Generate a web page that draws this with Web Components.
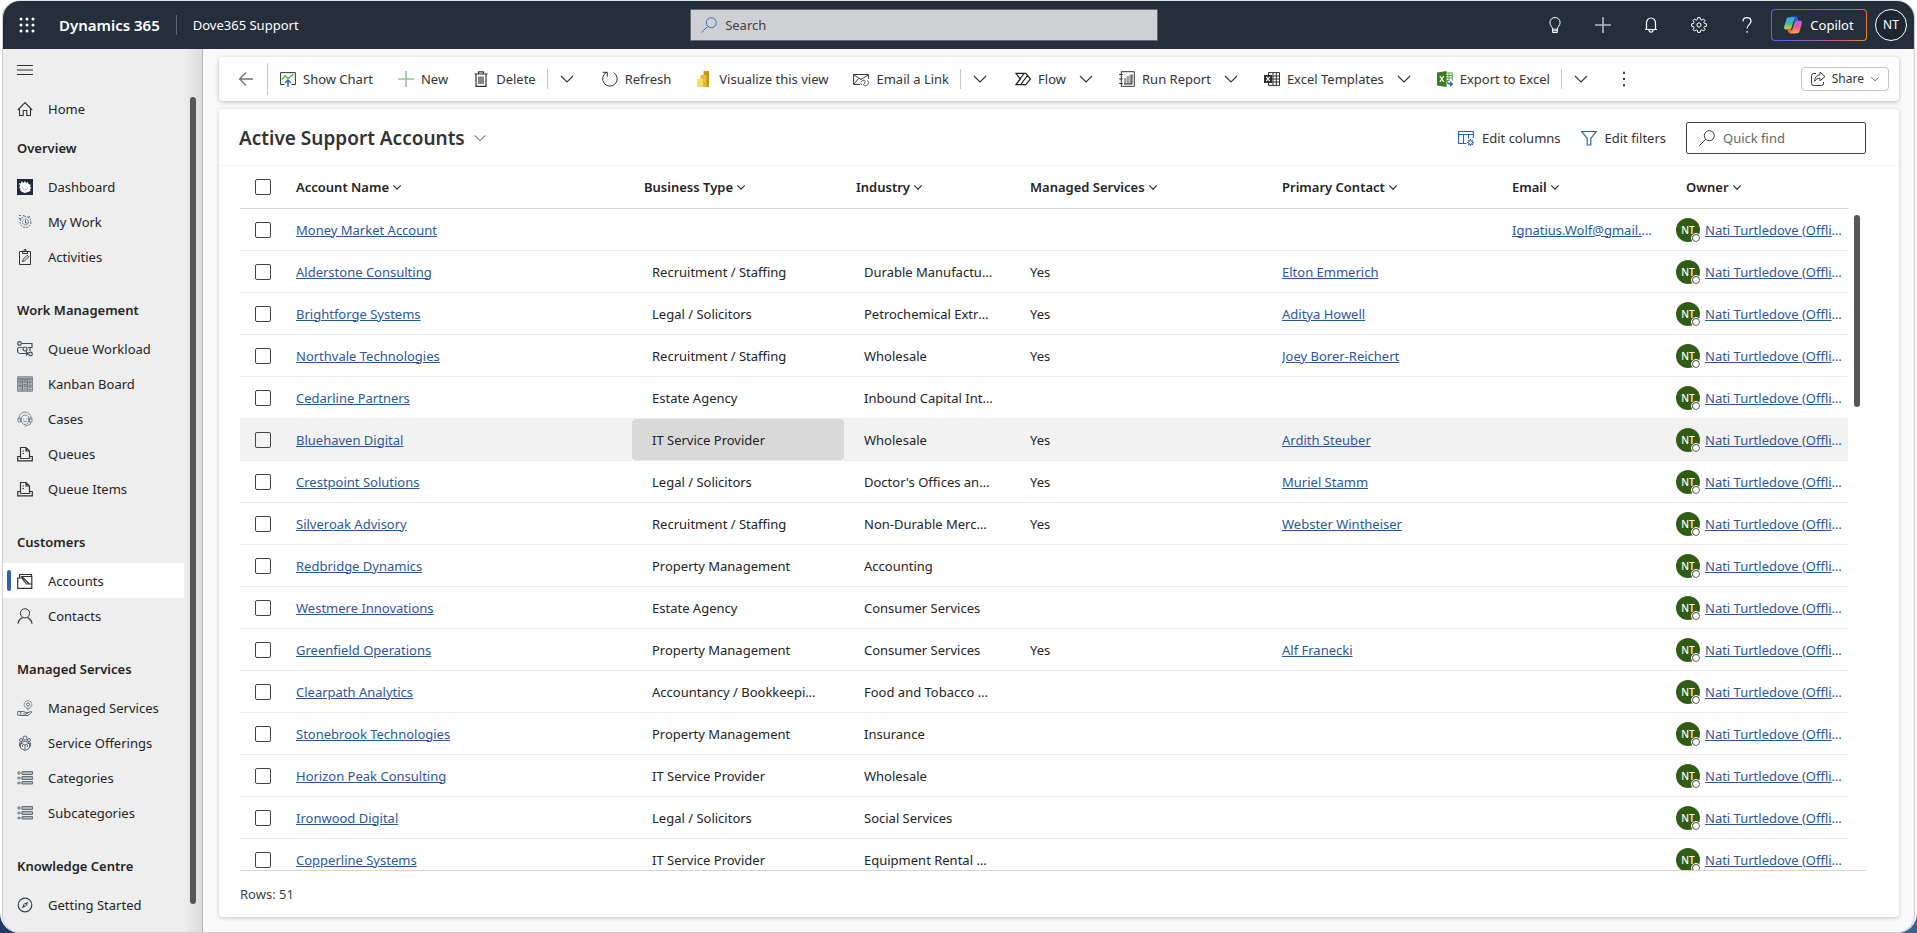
<!DOCTYPE html>
<html lang="en">
<head>
<meta charset="utf-8">
<title>Active Support Accounts - Dynamics 365</title>
<style>
  html, body { height: 100%; }
  body {
    margin: 0; overflow: hidden; font: 13px/20px "Noto Sans", "Open Sans", sans-serif; color: #242424;
    background: linear-gradient(#fff 50%, transparent 50%), linear-gradient(90deg, #1f3a68, #3e618e);
  }
</style>
</head>
<body>
<app-shell>
  <app-header slot="header"></app-header>
  <app-sidebar slot="sidebar">
    <nav-item icon="home">Home</nav-item>
    <nav-group label="Overview">
      <nav-item icon="dashboard">Dashboard</nav-item>
      <nav-item icon="mywork">My Work</nav-item>
      <nav-item icon="activities">Activities</nav-item>
    </nav-group>
    <nav-group label="Work Management" spaced>
      <nav-item icon="workload">Queue Workload</nav-item>
      <nav-item icon="kanban">Kanban Board</nav-item>
      <nav-item icon="cases">Cases</nav-item>
      <nav-item icon="queue">Queues</nav-item>
      <nav-item icon="queue">Queue Items</nav-item>
    </nav-group>
    <nav-group label="Customers" spaced>
      <nav-item icon="account" selected>Accounts</nav-item>
      <nav-item icon="contact">Contacts</nav-item>
    </nav-group>
    <nav-group label="Managed Services" spaced>
      <nav-item icon="managed">Managed Services</nav-item>
      <nav-item icon="offering">Service Offerings</nav-item>
      <nav-item icon="category">Categories</nav-item>
      <nav-item icon="category">Subcategories</nav-item>
    </nav-group>
    <nav-group label="Knowledge Centre" spaced>
      <nav-item icon="compass">Getting Started</nav-item>
    </nav-group>
  </app-sidebar>
  <command-bar>
    <command-button icon="chart">Show Chart</command-button>
    <command-button icon="plus">New</command-button>
    <command-button icon="trash" menu="split">Delete</command-button>
    <command-button icon="refresh">Refresh</command-button>
    <command-button icon="powerbi">Visualize this view</command-button>
    <command-button icon="mail" menu="split">Email a Link</command-button>
    <command-button icon="flow" menu="drop">Flow</command-button>
    <command-button icon="report" menu="drop">Run Report</command-button>
    <command-button icon="exceltpl" menu="drop">Excel Templates</command-button>
    <command-button icon="excel" menu="split">Export to Excel</command-button>
  </command-bar>
  <grid-view>
    <accounts-table></accounts-table>
  </grid-view>
</app-shell>

<script>
const ICONS = {
  waffle: '<g fill="#fff" stroke="none"><circle cx="2" cy="2" r="1.5"/><circle cx="8" cy="2" r="1.5"/><circle cx="14" cy="2" r="1.5"/><circle cx="2" cy="8" r="1.5"/><circle cx="8" cy="8" r="1.5"/><circle cx="14" cy="8" r="1.5"/><circle cx="2" cy="14" r="1.5"/><circle cx="8" cy="14" r="1.5"/><circle cx="14" cy="14" r="1.5"/></g>',
  search: '<circle cx="10.3" cy="5.7" r="5"/><path d="M6.7 9.3.4 15.6"/>',
  bulb: '<path d="M5.6 12.2c0-2.6-2.7-3.4-2.7-6.6a5.1 5.1 0 0 1 10.2 0c0 3.200-2.700 4-2.700 6.600zM5.600 12.200v3.300h4.800v-3.300M5.600 13.800h4.800"/>',
  add: '<path d="M8 0v16M0 8h16" stroke="#b4b8bd" stroke-width="1.6"/>',
  bell: '<path d="M3.500 12.500V6a4.500 5 0 0 1 9 0v6.500M2 12.500h12M6 13a2 2.200 0 0 0 4 0" stroke-width="1.200"/>',
  gear: '<circle cx="8" cy="8" r="2.100"/><path d="m6.800.6-.4 2-1.200.5L3.500 2 2 3.500l1.100 1.700-.5 1.200-2 .4v2.400l2 .4.5 1.200L2 12.500 3.500 14l1.700-1.100 1.200.5.4 2h2.400l.4-2 1.200-.5 1.700 1.100 1.500-1.500-1.100-1.700.5-1.200 2-.4V6.800l-2-.4-.5-1.200L14 3.500 12.500 2l-1.700 1.100-1.200-.5-.4-2z"/>',
  help: '<path d="M4 4.400C4 1.900 5.700.600 8 .600s4 1.400 4 3.600c0 3.200-4 3.600-4 7.300M8 14v1.800" stroke-width="1.200"/>',
  copilot: '<defs><linearGradient id="a" x1="0" y1="0" x2="0" y2="1"><stop offset="0" stop-color="#3aa8f5"/><stop offset=".5" stop-color="#3fb8a0"/><stop offset="1" stop-color="#e8c52a"/></linearGradient><linearGradient id="b" x1="0" y1="0" x2="0" y2="1"><stop offset="0" stop-color="#b85cf0"/><stop offset=".5" stop-color="#ee5d90"/><stop offset="1" stop-color="#f8a05a"/></linearGradient></defs><path stroke="none" fill="#2563d8" d="M6 .5h4.600c1 0 1.400.7 1.700 1.700l.9 2.800H9.800L8 3z"/><path stroke="none" fill="url(#a)" d="M4.300 1h5.300L7 9.500c-.5 1.500-1 2.500-2.500 2.500H1.600C.1 12-.2 10.600.2 9.200L2.300 2.500C2.600 1.500 3.200 1 4.300 1z"/><path stroke="none" fill="#f06a3a" d="M10 15.500H5.400c-1 0-1.400-.700-1.700-1.700L3 12h3.500z"/><path stroke="none" fill="url(#b)" d="M11.700 15.300H6.400L9 6.700C9.500 5.200 10 4.300 11.500 4.300h2.900c1.500 0 1.800 1.400 1.400 2.800l-2.100 6.700c-.3 1-.9 1.500-2 1.500z"/>',
  menu: '<path d="M0 3.500h16M0 8h16M0 12.500h16"/>',
  back: '<path d="M15 8H1.500M8 1.500 1.500 8 8 14.500" stroke="#777" stroke-width="1.300"/>',
  chevron: '<path d="m2 5 6 6 6-6" stroke-width="1.100"/>',
  chevbold: '<path d="m2 5.500 6 6 6-6" stroke-width="1.700"/>',
  home: '<path d="M.8 9 8 1.500 15.200 9M2.500 8v6.500h3.700v-5h3.600v5h3.700V8" stroke-width="1.100"/>',
  dashboard: '<path stroke="none" fill="#1f2b3a" d="M0 0h16v16H0z"/><path stroke="none" fill="#fff" d="m2 4 2 .5L4.500 2l2 2L8 2l1 2 2-1 .5 2L14 6l-1 1.500 1.500 1.500-1.500 1 .5 2-2.500 1-3 1-3-1-2-2 .5-1.500L2 8.500 3 7z"/><path d="M5 8.500c1 2 4 3 6 1" stroke="#8b95a0" stroke-width=".7"/>',
  mywork: '<g stroke="#596775"><circle cx="8.500" cy="8" r="5.500" stroke-dasharray="2 1"/><circle cx="8.500" cy="8" r="3" stroke-dasharray="1.500 .7"/><path d="M8.500 6v3h2M2 1.500h2M2 4.500h2M6 1.500h1.500M12 2l1 1.500"/></g>',
  activities: '<path d="M2.500 2.500h11v13h-11zM5.500 4.500v-2H7V.7h2v1.800h1.500v2zM5.500 12.500l.7-2.200 4-4 1.500 1.500-4 4z"/>',
  workload: '<g stroke="#3f4b58" stroke-width="1.200"><circle cx="2.500" cy="2.500" r="1.800"/><circle cx="8" cy="8" r="2"/><path d="M4.500 2.500H15v4h-4M5.500 6.500H2.500a2 2 0 0 0-2 2c0 3.500 1 4 3.500 4h6M9 10.500l2 2-2 2M13 6v4"/><circle cx="13.500" cy="13" r="1.800"/></g>',
  kanban: '<g stroke="#6b7580" stroke-width=".9"><path fill="#b8bcc1" d="M.6.8h14.800v2H.6zM.6 3h4.600v12.200H.6zM5.600 3h4.600v12.200H5.600zM10.600 3h4.800v12.200h-4.800z"/><path d="M2 5h2v2H2zM2 9h2v1.500H2zM7 4.500h2v2H7zM7 8.500h2v2H7zM12 5h2v2h-2zM12 9h2v2h-2zM2 13h2M7 13h2M12 13.500h2"/></g>',
  cases: '<g stroke="#828b94"><path d="M2 9V7a6 6 0 0 1 12 0v2M1 7h2.500v4H1zM12.500 7H15v4h-2.500zM4.500 6.500A4 4 0 0 1 8 4c2 0 3.500 1 3.500 2.500V10c0 2-1.500 3.500-3.500 3.500S4.500 12 4.500 10zM13.500 11v2l-4 2h-2M6 8h1M9 8h1M6.500 10.500h3"/></g>',
  queue: '<path d="M3.500 12.500V1.500h5.500l3.500 3.500v7.500M9 1.500V5h3.500M3.500 10.500H.7v4.300h14.600v-4.300h-2.800M3.500 12.500h9M5.500 5h1.500M5.500 7.500h1.500" stroke-width="1.200"/>',
  account: '<path d="M2.500 5V1.500h12v2M14.800 3v12.300H.7V5h4l4.800 6h5.300V3.500h-10l7.500 7.500" stroke-width="1.200"/>',
  contact: '<circle cx="8" cy="5.300" r="4.600"/><path d="M1 15.800c0-3 2-5 4.500-6.400M15 15.800c0-3-2-5-4.500-6.400" stroke-width="1.200"/>',
  managed: '<g stroke="#5d6975"><circle cx="11" cy="4.500" r="3.800" stroke-dasharray="2 .8"/><circle cx="11" cy="4.500" r="1.500"/><path d="M11 8.500v2M.7 11.500h3v3.800h-3zM3.700 11.500h3l2 1h2l-1 1.500H6M9.500 13.500l4-2 1.500.5-4 3.500H3.700"/></g>',
  offering: '<g stroke="#5d6975"><path d="m8 6 4.500 2v5L8 15.500 3.500 13V8zM3.500 8 8 10l4.500-2M8 10v5.500"/><circle cx="8" cy="3" r="2"/><circle cx="4" cy="5" r="1.500"/><circle cx="12" cy="5" r="1.500"/><path d="M2.500 7.500v4M13.500 7.500v4M6 5.500l1 1M10 5.500l-1 1M5.500 10v2M10.500 10v2"/></g>',
  category: '<g stroke="#66717c"><path fill="#b0b5ba" d="M5 1.500h10.500v3H5zM5 6.500h10.500v3H5zM5 11.500h10.500v2.500H5z"/><path d="M0 3h4.500M0 8h4.500M0 13h4.500M2 1v4M2 6.500v3M2 11.500v3"/></g>',
  compass: '<g stroke="#33404d"><circle cx="8" cy="8" r="6.800" stroke-width="1.200"/><path fill="#33404d" d="M11.300 4.700 9.200 9.200 4.700 11.300 6.800 6.800z" stroke="none"/><circle cx="8" cy="8" r=".9" fill="#eee" stroke="none"/></g>',
  chart: '<path d="M4.500 13.500H.6V1.600h14.800v11.900h-3.900"/><path stroke="#5fae57" stroke-width="1.400" d="m2 8.500 3-4 3 3 5.500-4.500"/><path stroke="#2f5fb3" stroke-width="1.400" d="M8 16V9.500M5 12l3-3 3 3"/>',
  plus: '<path d="M8 0v16M0 8h16" stroke="#98c894" stroke-width="1.700"/>',
  trash: '<path d="M1.500 3h13M5.500 3V.8h5V3M3 3v12.400h10V3M6 5.500V13M8 5.500V13M10 5.500V13" stroke-width="1.200"/>',
  refresh: '<path d="M4.700 1.300A7.300 7.300 0 1 0 11.500 1.500M.8 1.300h4.500v4.400"/>',
  powerbi: '<path stroke="none" fill="#c6921c" d="M7.500 1c0-.6.4-1 1-1h4.500v16H8z"/><path stroke="none" fill="#e5bd30" d="M4.500 5c0-.6.4-1 1-1h4c.6 0 1 .4 1 1v11h-6z"/><path stroke="none" fill="#f5dc6d" d="M1 9c0-.6.4-1 1-1h4c.6 0 1 .4 1 1v7H2c-.6 0-1-.4-1-1z"/>',
  mail: '<path d="M7 13.500H.6v-10h14.800V8M1 4l7 4.500L15 4M1 13l4.500-5.500"/><path stroke="#666" d="M8 11c1-1.800 3-2.200 4-1.200s0 2-1 1.700M15.500 12.500c-1 2.500-3.500 3-4.500 2s0-2.300 1.200-2M9 13.500c-1 0-1.500-1-1-2M14 9.500c1.200.3 2 1.500 1.500 3"/>',
  flow: '<path d="M.9 2.300h9.900L15.500 8l-4.700 5.700H.9L5.500 8zM9 2.500.9 13.700M12.500 4.500 5.700 13.700" stroke="#222" stroke-width="1.200"/>',
  report: '<path d="M2.300.7h13v14.600h-13zM.2 3.500h3.500M.2 8h3.500M.2 12.500h3.500"/><path stroke="none" fill="#999" d="M5 7h2.200v6H5zM7.700 5h2.200v8H7.700zM10.400 3.500H13V13h-2.600z"/><path d="M5 13h8V3.500"/>',
  exceltpl: '<path d="M4.500 4V1.600h11v12.800h-11V12M4.500 5h11M4.500 8h11M4.500 11h11M9 1.600v12.800M12.300 1.600v12.800"/><path stroke="none" fill="#2d2d2d" d="M0 4h8v8H0z"/><path stroke="#fff" stroke-width="1.100" d="m2.300 5.800 3.400 4.400M5.700 5.800 2.300 10.200"/>',
  excel: '<path stroke="#5c9b43" d="M9 2h6.300v7.500M9 4.500h6M9 7h6M9 9.500h3M12 2v8"/><path stroke="none" fill="#3b7d1e" d="M0 1.500 9.500 0v16L0 14.500z"/><path stroke="#fff" stroke-width="1.300" d="m2.800 5 4 6M6.800 5l-4 6"/><path stroke="#2f5fb3" stroke-width="1.300" d="M10.500 10.500c0 1.800.8 2.500 2.500 2.500h2M13 10.800l2.300 2.200-2.300 2.400"/>',
  dots: '<g fill="#333" stroke="none"><path d="M7 .8h2v2H7zM7 7h2v2H7zM7 13.200h2v2H7z"/></g>',
  share: '<path d="M6 2.500H3.500a2 2 0 0 0-2 2v8a2 2 0 0 0 2 2h8a2 2 0 0 0 2-2V11M10 1.200l5 4.300-5 4.300V7.300c-2.500 0-4 .7-5.500 3C4.700 6.500 6.500 4 10 3.700z"/>',
  columns: '<g stroke="#2f5fb3"><path d="M8.500 13.500H.6V1.500h14.800V8M.6 4.500h14.800M5.500 4.500v9M10.500 4.500v4" stroke-width="1.100"/><circle cx="12.500" cy="12.500" r="2"/><path d="M12.500 9v1.500M12.500 14.500V16M9 12.500h1.500M14.500 12.500H16M10 10l1 1M14 14l1 1M15 10l-1 1M11 14l-1 1"/></g>',
  filter: '<path stroke="#2f5fb3" stroke-width="1.200" d="M.8 1.500h14.400L9.800 8.500v6.500H6.200V8.500z"/>'
};

/* Base class: renders the template of the element into an open shadow root. */
class UIElement extends HTMLElement {
  connectedCallback() {
    if (this.shadowRoot) return;
    this.attachShadow({ mode: 'open' }).innerHTML = this.render();
  }
}

customElements.define('ui-icon', class extends UIElement {
  render() {
    return `<style>
      :host { display: inline-flex; flex: none; width: var(--size, 16px); height: var(--size, 16px); }
      svg { width: 100%; height: 100%; overflow: visible; }
    </style><svg viewBox="0 0 16 16" fill="none" stroke="currentColor" aria-hidden="true">${ICONS[this.getAttribute('name')]}</svg>`;
  }
});

customElements.define('app-shell', class extends UIElement {
  render() {
    return `<style>
      :host { display: block; box-sizing: border-box; height: 100vh; padding: 0 2px; background: #fff; border-radius: 0 0 20px 20px; }
      .frame { box-sizing: border-box; height: 100%; display: flex; flex-direction: column; overflow: hidden; border: 1px solid #ccc; border-top-color: #dfe3e3; border-radius: 18px; background: #f9f9f9; }
      .below { flex: 1; min-height: 0; display: flex; }
      main { flex: 1; min-width: 0; display: flex; flex-direction: column; gap: 8px; padding: 8px 15px 15px 16px; }
    </style>
    <div class="frame"><slot name="header"></slot>
      <div class="below"><slot name="sidebar"></slot><main><slot></slot></main></div>
    </div>`;
  }
});

customElements.define('app-header', class extends UIElement {
  render() {
    return `<style>
      :host { display: grid; grid-template-columns: 10fr 468px 11fr; align-items: center; flex: none; height: 48px; background: #252f3b; color: #fff; }
      .left, .right { display: flex; align-items: center; }
      .left { padding-left: 16px; }
      .right { justify-content: flex-end; padding-right: 7px; }
      button { all: unset; box-sizing: border-box; display: inline-flex; align-items: center; justify-content: center; height: 32px; }
      .brand { margin-left: 24px; font-size: 15px; font-weight: 600; }
      .app { margin-left: 16px; padding-left: 16px; line-height: 20px; border-left: 1px solid #5c6570; }
      .search { display: flex; align-items: center; gap: 8px; box-sizing: border-box; height: 32px; padding: 0 10px; background: #cfd0d4; border: 1px solid #666b72; color: #3b6fc4; }
      input { all: unset; flex: 1; color: #444; }
      input::placeholder { color: #444; opacity: 1; }
      .tool { width: 48px; }
      .copilot { width: 96px; gap: 8px; border: 1px solid transparent; border-radius: 4px;
        background: linear-gradient(#252f3b, #252f3b) padding-box, linear-gradient(120deg, #5b5ff0 25%, #a556c0 55%, #d9506e 75%, #e8912c) border-box; }
      .copilot ui-icon { --size: 18px; }
      .me { width: 32px; margin-left: 8px; border: 1px solid #fff; border-radius: 50%; background: #1d2631; font-size: 12px; }
    </style>
    <div class="left"><button aria-label="App launcher"><ui-icon name="waffle"></ui-icon></button>
      <span class="brand">Dynamics 365</span><span class="app">Dove365 Support</span></div>
    <label class="search"><ui-icon name="search"></ui-icon><input placeholder="Search" aria-label="Search"></label>
    <div class="right">
      ${['bulb', 'add', 'bell', 'gear', 'help'].map(n => `<button class="tool" aria-label="${n}"><ui-icon name="${n}"></ui-icon></button>`).join('')}
      <button class="copilot"><ui-icon name="copilot"></ui-icon>Copilot</button>
      <button class="me">NT</button>
    </div>`;
  }
});

customElements.define('app-sidebar', class extends UIElement {
  render() {
    return `<style>
      :host { display: block; flex: none; position: relative; box-sizing: border-box; width: 200px; overflow: hidden; border-right: 1px solid #b5b5b5; background: linear-gradient(90deg, #eee 180px, #dcdcdc); }
      nav { width: 181px; }
      button { all: unset; display: flex; align-items: center; height: 42px; padding-left: 14px; color: #333; }
      .thumb { position: absolute; right: 6px; top: 48px; bottom: 28px; width: 6px; border-radius: 3px; background: #565656; }
    </style>
    <button aria-label="Site map"><ui-icon name="menu"></ui-icon></button>
    <nav><slot></slot></nav><div class="thumb"></div>`;
  }
});

customElements.define('nav-group', class extends UIElement {
  render() {
    return `<style>
      :host { display: block; }
      :host([spaced]) { padding-top: 14px; }
      h2 { margin: 0; height: 43px; padding-left: 14px; font-size: 13px; font-weight: 600; line-height: 45px; }
    </style><h2>${this.getAttribute('label')}</h2><slot></slot>`;
  }
});

customElements.define('nav-item', class extends UIElement {
  render() {
    return `<style>
      :host { display: block; position: relative; }
      a { display: flex; align-items: center; gap: 15px; height: 35px; padding-left: 14px; color: #333; text-decoration: none; }
      :host([selected]) { background: #fff; }
      :host([selected])::before { content: ""; position: absolute; left: 4px; top: 7px; width: 4px; height: 21px; border-radius: 2px; background: #2f5fb3; }
      span { color: #242424; }
    </style><a href="#"><ui-icon name="${this.getAttribute('icon')}"></ui-icon><span><slot></slot></span></a>`;
  }
});

customElements.define('command-bar', class extends UIElement {
  render() {
    return `<style>
      :host { display: flex; align-items: center; flex: none; height: 44px; padding: 0 10px 0 19px; border-radius: 4px; background: #fff; box-shadow: 0 1px 4px rgba(0,0,0,.26); }
      button { all: unset; display: flex; align-items: center; color: #333; }
      .rule { width: 1px; height: 32px; margin: 0 12px 0 13px; background: #c8c8c8; }
      .items { display: flex; align-items: center; gap: 25px; }
      .share { margin-left: auto; box-sizing: border-box; height: 24px; padding: 0 8px; gap: 6px; border: 1px solid #c4c4c4; border-radius: 4px; font-size: 12px; }
      .share ui-icon:last-child { --size: 10px; }
    </style>
    <button aria-label="Back"><ui-icon name="back"></ui-icon></button><span class="rule"></span>
    <div class="items"><slot></slot><button aria-label="More commands"><ui-icon name="dots"></ui-icon></button></div>
    <button class="share"><ui-icon name="share"></ui-icon>Share<ui-icon name="chevron"></ui-icon></button>`;
  }
});

customElements.define('command-button', class extends UIElement {
  render() {
    const menu = this.getAttribute('menu');
    return `<style>
      :host { display: flex; align-items: center; white-space: nowrap; }
      button { all: unset; display: flex; align-items: center; gap: 7px; color: #333; }
      .split { height: 20px; padding: 0 2px 0 11px; margin-left: 11px; border-left: 1px solid #c8c8c8; }
      .drop { margin-left: 12px; }
    </style><button><ui-icon name="${this.getAttribute('icon')}"></ui-icon><span><slot></slot></span></button>
    ${menu ? `<button class="${menu}" aria-label="More options"><ui-icon name="chevron"></ui-icon></button>` : ''}`;
  }
});

customElements.define('grid-view', class extends UIElement {
  render() {
    return `<style>
      :host { display: flex; flex-direction: column; flex: 1; min-height: 0; border-radius: 4px; background: #fff; box-shadow: 0 1px 4px rgba(0,0,0,.2); }
      header { display: flex; align-items: center; gap: 20px; flex: none; box-sizing: border-box; height: 57px; padding: 2px 33px 0 20px; border-bottom: 1px solid #f4f4f4; }
      h1 { margin: 0; font-size: 19px; line-height: 24px; font-weight: 600; }
      button { all: unset; display: flex; align-items: center; gap: 8px; color: #333; }
      .view { margin-right: auto; }
      .view ui-icon { --size: 14px; }
      .find { display: flex; align-items: center; gap: 8px; box-sizing: border-box; width: 180px; height: 32px; padding: 0 12px; border: 1px solid #444; border-radius: 2px; color: #333; }
      input { all: unset; flex: 1; min-width: 0; }
      input::placeholder { color: #666; opacity: 1; }
      .body { flex: 1; min-height: 0; overflow: hidden; position: relative; margin: 0 33px 0 21px; padding-right: 18px; border-bottom: 1px solid #d6d6d6; }
      .thumb { position: absolute; right: 6px; top: 49px; width: 6px; height: 192px; border-radius: 3px; background: #565656; }
      footer { flex: none; padding: 13px 21px; color: #424242; }
    </style>
    <header><button class="view"><h1>Active Support Accounts</h1><ui-icon name="chevron"></ui-icon></button>
      <button><ui-icon name="columns"></ui-icon>Edit columns</button>
      <button><ui-icon name="filter"></ui-icon>Edit filters</button>
      <label class="find"><ui-icon name="search"></ui-icon><input placeholder="Quick find" aria-label="Quick find"></label>
    </header>
    <div class="body"><slot></slot><div class="thumb"></div></div>
    <footer>Rows: 51</footer>`;
  }
});

const COLUMNS = [['Account Name', 348], ['Business Type', 212], ['Industry', 174], ['Managed Services', 252], ['Primary Contact', 230], ['Email', 174], ['Owner', 174]];
const ROWS = [
  ['Money Market Account', '', '', '', '', 'Ignatius.Wolf@gmail.com'],
  ['Alderstone Consulting', 'Recruitment / Staffing', 'Durable Manufacturing', 'Yes', 'Elton Emmerich'],
  ['Brightforge Systems', 'Legal / Solicitors', 'Petrochemical Extraction', 'Yes', 'Aditya Howell'],
  ['Northvale Technologies', 'Recruitment / Staffing', 'Wholesale', 'Yes', 'Joey Borer-Reichert'],
  ['Cedarline Partners', 'Estate Agency', 'Inbound Capital Intensive Processing'],
  ['Bluehaven Digital', 'IT Service Provider', 'Wholesale', 'Yes', 'Ardith Steuber'],
  ['Crestpoint Solutions', 'Legal / Solicitors', "Doctor's Offices and Clinics", 'Yes', 'Muriel Stamm'],
  ['Silveroak Advisory', 'Recruitment / Staffing', 'Non-Durable Merchandise', 'Yes', 'Webster Wintheiser'],
  ['Redbridge Dynamics', 'Property Management', 'Accounting'],
  ['Westmere Innovations', 'Estate Agency', 'Consumer Services'],
  ['Greenfield Operations', 'Property Management', 'Consumer Services', 'Yes', 'Alf Franecki'],
  ['Clearpath Analytics', 'Accountancy / Bookkeeping', 'Food and Tobacco Processing'],
  ['Stonebrook Technologies', 'Property Management', 'Insurance'],
  ['Horizon Peak Consulting', 'IT Service Provider', 'Wholesale'],
  ['Ironwood Digital', 'Legal / Solicitors', 'Social Services'],
  ['Copperline Systems', 'IT Service Provider', 'Equipment Rental and Leasing']
];

customElements.define('owner-persona', class extends UIElement {
  render() {
    return `<style>
      :host { display: flex; align-items: center; gap: 5px; }
      .coin { position: relative; flex: none; width: 24px; border-radius: 50%; background: #325c14; color: #fff; font-size: 10px; font-weight: 500; line-height: 24px; text-align: center; }
      .coin i { position: absolute; right: 0; bottom: 0; box-sizing: border-box; width: 8px; height: 8px; border: 1px solid #555; border-radius: 50%; background: #fff; outline: 1px solid #fff; }
      a { overflow: hidden; text-overflow: ellipsis; white-space: nowrap; color: #2b579a; }
    </style><span class="coin">NT<i></i></span><a href="#"><slot></slot></a>`;
  }
});

customElements.define('accounts-table', class extends UIElement {
  render() {
    const link = t => t ? `<a href="#">${t}</a>` : '';
    return `<style>
      :host { display: block; }
      table { width: 100%; table-layout: fixed; border-spacing: 0; }
      th, td { box-sizing: border-box; height: 42px; padding: 0 20px 0 12px; text-align: left; white-space: nowrap; overflow: hidden; text-overflow: ellipsis; border-bottom: 1px solid #ebebeb; }
      th { height: 43px; font-weight: 600; border-bottom-color: #d6d6d6; }
      th button { all: unset; display: inline-flex; align-items: center; gap: 3px; }
      th ui-icon { --size: 10px; }
      .pick { padding: 0 0 0 15px; }
      td.text { padding: 0 25px 0 20px; }
      td.owner { padding: 0 2px; }
      input { display: block; appearance: none; box-sizing: border-box; width: 16px; height: 16px; margin: 0; border: 1px solid #444; border-radius: 2px; }
      a { display: block; overflow: hidden; text-overflow: ellipsis; color: #2b579a; }
      .hover td { background: #f2f2f2; }
      .hover .active { background: #d9d9d9; border-radius: 4px; }
    </style>
    <table>
      <colgroup><col style="width:44px">${COLUMNS.map(c => `<col style="width:${c[1]}px">`).join('')}</colgroup>
      <thead><tr><th class="pick"><input type="checkbox" aria-label="Select all rows"></th>
        ${COLUMNS.map(c => `<th><button>${c[0]}<ui-icon name="chevbold"></ui-icon></button></th>`).join('')}</tr></thead>
      <tbody>${ROWS.map((r, i) => `<tr${i === 5 ? ' class="hover"' : ''}>
        <td class="pick"><input type="checkbox" aria-label="Select ${r[0]}"></td>
        <td>${link(r[0])}</td><td class="text${i === 5 ? ' active' : ''}">${r[1]}</td><td class="text">${r[2] || ''}</td>
        <td>${r[3] || ''}</td><td>${link(r[4])}</td><td>${link(r[5])}</td>
        <td class="owner"><owner-persona>Nati Turtledove (Offline)</owner-persona></td></tr>`).join('')}</tbody>
    </table>`;
  }
});
</script>
</body>
</html>
